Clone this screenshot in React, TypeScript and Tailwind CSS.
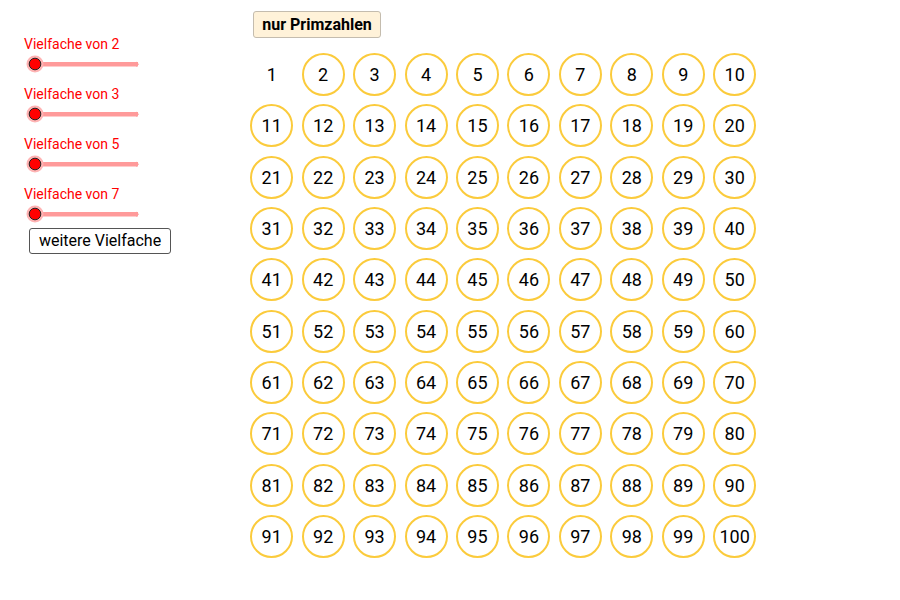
import React from 'react';

const multiples = [2, 3, 5, 7];

// Slider drawn as svg: pink track, thumb parked at the left end
const Slider: React.FC = () => (
  <svg width="122" height="20" viewBox="0 0 122 20" className="block">
    <rect x="3" y="8" width="111" height="4.5" fill="#ff9a9a" />
    <path d="M112 7.5 L115 10.2 L112 13 Z" fill="#ff9a9a" />
    <circle cx="11" cy="10" r="8.5" fill="#ffb3b3" />
    <circle cx="11" cy="10" r="5.8" fill="#ff0000" stroke="#222" strokeWidth="1" />
  </svg>
);

export default function App() {
  const numbers = Array.from({ length: 100 }, (_, i) => i + 1);

  return (
    <div
      className="w-[900px] h-[600px] bg-white flex"
      style={{ fontFamily: 'Roboto, "Liberation Sans", sans-serif' }}
    >
      {/* Left panel: sliders */}
      <div className="w-[246px] flex flex-col pl-[24px] pt-[36px]">
        {multiples.map((m) => (
          <div key={m} className="flex flex-col h-[50px]">
            <div className="h-[16px] leading-[16px] text-[14px] text-[#ff0000]">Vielfache von {m}</div>
            <div className="mt-[2px]">
              <Slider />
            </div>
          </div>
        ))}
        <button className="-mt-[8px] ml-[5px] w-[142px] h-[26px] border-[1.5px] border-[#555] rounded-[3px] bg-white text-[16px] text-black leading-none flex items-center justify-center">
          weitere Vielfache
        </button>
      </div>

      {/* Right panel: hundred board */}
      <div className="flex flex-col pt-[11px]">
        <button className="ml-[7px] w-[128px] h-[27px] bg-[#fff2d9] border border-[#c4bcae] rounded-[3px] text-[16px] font-bold text-black leading-none flex items-center justify-center">
          nur Primzahlen
        </button>
        <div className="mt-[11px] grid grid-cols-[repeat(10,51.44px)] auto-rows-[51.33px]">
          {numbers.map((n) => (
            <div key={n} className="flex items-center justify-center">
              {n === 1 ? (
                <span className="text-[18px] text-black">1</span>
              ) : (
                <div className="w-[43px] h-[43px] rounded-full border-[2.5px] border-[#fbcb3c] flex items-center justify-center text-[18px] text-black">
                  {n}
                </div>
              )}
            </div>
          ))}
        </div>
      </div>
    </div>
  );
}
